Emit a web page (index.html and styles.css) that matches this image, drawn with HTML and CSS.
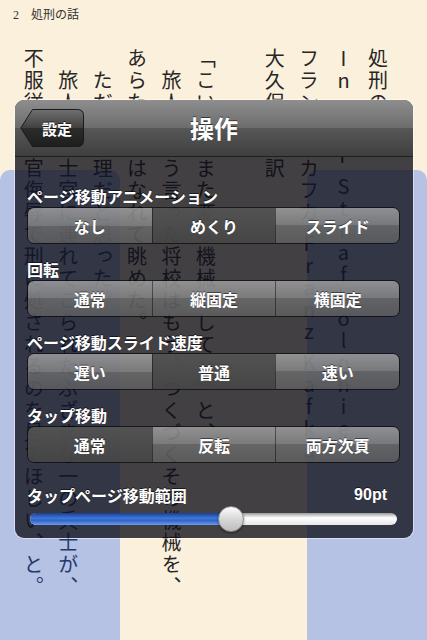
FILE: index.html
```html
<!DOCTYPE html>
<html lang="ja">
<head>
  <meta charset="UTF-8" />
  <meta name="viewport" content="width=device-width, initial-scale=1.0"/>
  <title>操作</title>
  <link rel="stylesheet" href="styles.css">
</head>
<body>
  <div class="page">
    <div class="running-head">2　処刑の話</div>

    <div class="body-text">
      <p>処刑の話</p>
      <p class="latin">In der Strafkolonie</p>
      <p class="latin">フランツ・カフカ Franz Kafka</p>
      <p>大久保ゆう訳</p>
      <p>　</p>
      <p>「こいつはまた変な機械でしてね」と、</p>
      <p>　旅人にそう言った将校はもう、つくづくその機械を、</p>
      <p>あらためてはなれて眺めた。</p>
      <p>　ただ、無理だと思った。</p>
      <p>　旅人は、士官に連れてこられたぶざまな一の兵士が、</p>
      <p>不服従と上官侮辱で刑に処されるのを見てほしい、と。</p>
    </div>

    <!-- blue page-turn zones drawn over the text -->
    <div class="tint">
      <span></span>
      <span></span>
    </div>

    <div class="sheet">
      <div class="navbar">
        <a class="back">
          <svg viewBox="0 0 64 38" width="64" height="38">
            <defs>
              <linearGradient id="backFill" x1="0" y1="0" x2="0" y2="1">
                <stop offset="0" stop-color="#707070"/>
                <stop offset=".5" stop-color="#404040"/>
                <stop offset=".5" stop-color="#2c2c2c"/>
                <stop offset="1" stop-color="#1e1e1e"/>
              </linearGradient>
            </defs>
            <path d="M12.5 .5H57.5Q63.5 .5 63.5 6.5V31.5Q63.5 37.5 57.5 37.5H12.5L.8 19Z" fill="url(#backFill)" stroke="#1a1a1a"/>
          </svg>
          <span>設定</span>
        </a>
        <h1>操作</h1>
      </div>

      <div class="sheet-body">
        <div class="group">
          <div class="label">ページ移動アニメーション</div>
          <div class="seg">
            <span>なし</span>
            <span class="is-on">めくり</span>
            <span>スライド</span>
          </div>
        </div>

        <div class="group">
          <div class="label">回転</div>
          <div class="seg">
            <span>通常</span>
            <span>縦固定</span>
            <span>横固定</span>
          </div>
        </div>

        <div class="group">
          <div class="label">ページ移動スライド速度</div>
          <div class="seg">
            <span>遅い</span>
            <span class="is-on">普通</span>
            <span>速い</span>
          </div>
        </div>

        <div class="group">
          <div class="label">タップ移動</div>
          <div class="seg">
            <span class="is-on">通常</span>
            <span>反転</span>
            <span>両方次頁</span>
          </div>
        </div>

        <div class="group range">
          <div class="label label-row">
            <span>タップページ移動範囲</span>
            <span class="value">90pt</span>
          </div>
          <div class="slider">
            <div class="slider-track">
              <div class="slider-fill" style="width: 54.8%"></div>
            </div>
            <div class="slider-thumb" style="left: 54.8%"></div>
          </div>
        </div>
      </div>
    </div>
  </div>
</body>
</html>
```

FILE: styles.css
```css
* {
  box-sizing: border-box;
}
html, body {
  margin: 0;
}
body {
  width: 427px;
  height: 640px;
  overflow: hidden;
  background-color: #fbf0dc;
  font-family: "Noto Sans CJK JP", sans-serif;
}
.page {
  position: relative;
  height: 640px;
}

/* book page */
.running-head {
  height: 26px;
  padding: 8px 0 0 13px;
  font-family: "Liberation Serif", "Noto Sans CJK JP", serif;
  font-size: 12px;
  line-height: 14px;
  color: #333;
}
.body-text {
  writing-mode: vertical-rl;
  text-orientation: upright;
  margin: 22px 0 0 16px;
  width: 378.4px;
  height: 560px;
  font-family: "Noto Sans CJK JP", serif;
  font-size: 20px;
  font-weight: 400;
  letter-spacing: 2px;
  line-height: 34.4px;
  color: #262626;
}
.body-text p {
  margin: 0;
  white-space: nowrap;
}
.body-text .latin {
  word-spacing: -13px;
}
.tint {
  position: absolute;
  top: 170px;
  left: 0;
  right: 0;
  bottom: 0;
  display: flex;
  justify-content: space-between;
}
.tint span {
  width: 120px;
  background-color: rgba(40, 100, 245, 0.33);
  border-radius: 10px 10px 0 0;
}

/* settings sheet */
.sheet {
  position: absolute;
  left: 15px;
  top: 100px;
  width: 398px;
  height: 438px;
  border-radius: 9px;
  overflow: hidden;
  background-color: rgba(14, 14, 24, 0.78);
  box-shadow: 0 0 0 1px rgba(255, 255, 255, 0.45);
}
.navbar {
  height: 57px;
  display: grid;
  grid-template-columns: 1fr auto 1fr;
  align-items: center;
  background: linear-gradient(#8e8e8e, #6c6c6c 50%, #575757 50%, #3f3f3f);
  border-bottom: 1px solid #1e1e1e;
}
.navbar h1 {
  margin: 0;
  font-size: 24px;
  line-height: 30px;
  font-weight: 700;
  color: #fff;
  text-shadow: 0 -1px 0 rgba(0, 0, 0, 0.55);
}
.back {
  justify-self: start;
  margin-left: 5px;
  display: grid;
}
.back > * {
  grid-area: 1 / 1;
}
.back svg {
  display: block;
}
.back span {
  align-self: center;
  justify-self: center;
  padding-left: 10px;
  font-size: 15px;
  font-weight: 700;
  color: #fff;
  text-shadow: 0 -1px 0 rgba(0, 0, 0, 0.6);
}

.sheet-body {
  padding: 29px 13px 0 12px;
}
.group + .group {
  margin-top: 15px;
}
.group.range {
  margin-top: 22px;
}
.label {
  margin-bottom: 1px;
  font-size: 16px;
  line-height: 20px;
  font-weight: 700;
  color: #fff;
  text-shadow: 0 -1px 0 rgba(0, 0, 0, 0.6);
}
.label-row {
  display: flex;
  justify-content: space-between;
  padding-right: 13px;
}
.value {
  font-family: "Liberation Sans", sans-serif;
}

.seg {
  display: grid;
  grid-template-columns: 1fr 1fr 1fr;
  height: 37px;
  border-radius: 7px;
  overflow: hidden;
  border: 1px solid rgba(0, 0, 0, 0.6);
}
.seg span {
  display: flex;
  align-items: center;
  justify-content: center;
  font-size: 16px;
  font-weight: 700;
  color: #fff;
  text-shadow: 0 -1px 0 rgba(0, 0, 0, 0.5);
  background: linear-gradient(rgba(168, 168, 168, 0.78), rgba(138, 138, 138, 0.78) 50%, rgba(112, 112, 112, 0.78) 50%, rgba(98, 98, 98, 0.78));
  border-left: 1px solid rgba(0, 0, 0, 0.45);
}
.seg span:first-child {
  border-left: 0;
}
.seg .is-on {
  background: linear-gradient(rgba(84, 84, 84, 0.92), rgba(70, 70, 70, 0.92));
}

.slider {
  position: relative;
  height: 26px;
  margin: 1px 3px 0;
}
.slider-track {
  position: absolute;
  left: 0;
  right: 0;
  top: 7px;
  height: 12px;
  border-radius: 6px;
  overflow: hidden;
  background: linear-gradient(#9a9a9a, #fff 40%, #e6e6e6);
}
.slider-fill {
  height: 100%;
  background: linear-gradient(#1b3f8f, #3f78dc 45%, #2d63c8 60%, #6b9be8);
}
.slider-thumb {
  position: absolute;
  top: 0;
  width: 26px;
  height: 26px;
  margin-left: -13px;
  border-radius: 50%;
  border: 1px solid #8a8a8a;
  background: linear-gradient(#fdfdfd, #d8d8d8 50%, #bdbdbd);
  box-shadow: 0 1px 2px rgba(0, 0, 0, 0.5);
}
```
